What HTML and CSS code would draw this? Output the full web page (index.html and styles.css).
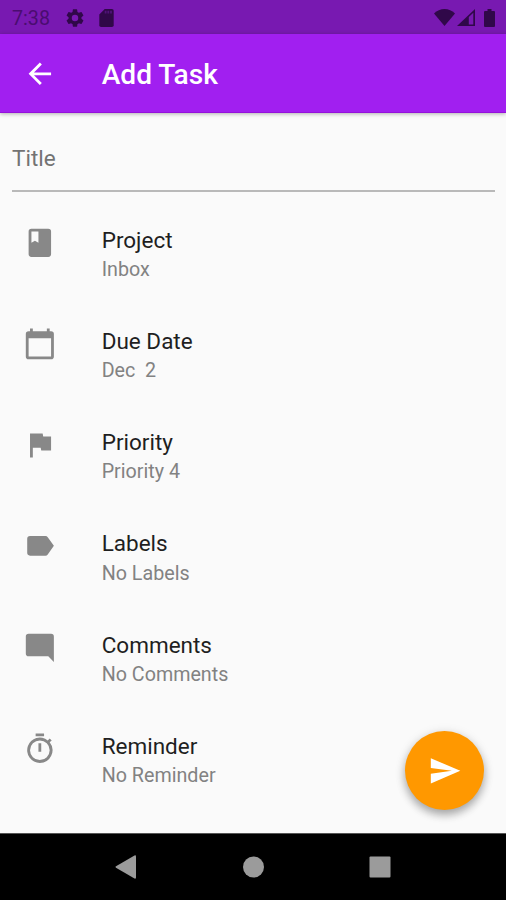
FILE: index.html
```html
<!DOCTYPE html>
<html lang="en">
<head>
<meta charset="utf-8">
<title>Add Task</title>
<link rel="stylesheet" href="styles.css">
</head>
<body>
<div class="screen">
  <div class="status">
    <span class="time">7:38</span>
    <svg class="gear" viewBox="2 2 20 20"><path d="M19.14 12.94c.04-.3.06-.61.06-.94s-.02-.64-.07-.94l2.03-1.58a.49.49 0 0 0 .12-.61l-1.92-3.32a.49.49 0 0 0-.59-.22l-2.39.96c-.5-.38-1.03-.7-1.62-.94l-.36-2.54a.48.48 0 0 0-.48-.41h-3.84c-.24 0-.43.17-.47.41l-.36 2.54c-.59.24-1.13.57-1.62.94l-2.39-.96a.48.48 0 0 0-.59.22L2.74 8.87c-.12.21-.08.47.12.61l2.03 1.58c-.05.3-.09.63-.09.94s.02.64.07.94l-2.03 1.58a.49.49 0 0 0-.12.61l1.92 3.32c.12.22.37.29.59.22l2.39-.96c.5.38 1.03.7 1.62.94l.36 2.54c.05.24.24.41.48.41h3.84c.24 0 .44-.17.47-.41l.36-2.54c.59-.24 1.13-.56 1.62-.94l2.39.96c.22.08.47 0 .59-.22l1.92-3.32a.48.48 0 0 0-.12-.61zM12 15.6A3.6 3.6 0 1 1 12 8.4a3.6 3.6 0 0 1 0 7.2z"/></svg>
    <svg class="sd" viewBox="4 2 16 20"><path d="M18 2h-8L4.02 8 4 20a2 2 0 0 0 2 2h12a2 2 0 0 0 2-2V4a2 2 0 0 0-2-2z"/><path class="pins" d="M10 4h2v3h-2zM13 4h2v3h-2zM16 4h2v3h-2z"/></svg>
    <svg class="wifi" viewBox="0 0 21 17"><path d="M0 4.5C3 1.5 6.500 0 10.500 0S18 1.500 21 4.500L10.500 17z"/></svg>
    <svg class="signal" viewBox="0 0 18 17"><path fill-rule="evenodd" d="M0 17 18 0v17zM11.800 8v7.500h4.500V3.800z"/></svg>
    <svg class="battery" viewBox="0 0 11 18"><path d="M3.500 0h4v2H10a1 1 0 0 1 1 1v14a1 1 0 0 1-1 1H1a1 1 0 0 1-1-1V3a1 1 0 0 1 1-1h2.500z"/></svg>
  </div>
  <header class="appbar">
    <svg class="icon" viewBox="0 0 24 24"><path d="M20 11H7.830l5.590-5.590L12 4l-8 8 8 8 1.410-1.410L7.830 13H20z"/></svg>
    <h1>Add Task</h1>
  </header>
  <main>
    <div class="field">Title</div>
    <ul class="list">
      <li><svg class="icon" viewBox="0 0 24 24"><path d="M18 2H6a2 2 0 0 0-2 2v16a2 2 0 0 0 2 2h12a2 2 0 0 0 2-2V4a2 2 0 0 0-2-2zM6 4h5v8l-2.500-1.500L6 12z"/></svg><div><p class="name">Project</p><p class="value">Inbox</p></div></li>
      <li><svg class="icon" viewBox="0 0 24 24"><path d="M20 3h-1V1h-2v2H7V1H5v2H4a2 2 0 0 0-2 2v16a2 2 0 0 0 2 2h16a2 2 0 0 0 2-2V5a2 2 0 0 0-2-2zm0 18H4V8h16z"/></svg><div><p class="name">Due Date</p><p class="value">Dec  2</p></div></li>
      <li><svg class="icon" viewBox="0 0 24 24"><path d="M14.400 6 14 4H5v17h2v-7h5.600l.4 2h7V6z"/></svg><div><p class="name">Priority</p><p class="value">Priority 4</p></div></li>
      <li><svg class="icon" viewBox="0 0 24 24"><path d="M17.630 5.840A2 2 0 0 0 16 5L5 5.010A2 2 0 0 0 3 7v10a2 2 0 0 0 2 1.990L16 19a2 2 0 0 0 1.630-.84L22 12z"/></svg><div><p class="name">Labels</p><p class="value">No Labels</p></div></li>
      <li><svg class="icon" viewBox="0 0 24 24"><path d="M21.990 4A2 2 0 0 0 20 2H4a2 2 0 0 0-2 2v12a2 2 0 0 0 2 2h14l4 4z"/></svg><div><p class="name">Comments</p><p class="value">No Comments</p></div></li>
      <li><svg class="icon" viewBox="0 0 24 24"><path d="M15 1H9v2h6zm-4 13h2V8h-2zm8.030-6.610 1.420-1.420a11 11 0 0 0-1.410-1.410l-1.420 1.420A9 9 0 1 0 12 22a9 9 0 0 0 7.030-14.610zM12 20a7 7 0 1 1 0-14 7 7 0 0 1 0 14z"/></svg><div><p class="name">Reminder</p><p class="value">No Reminder</p></div></li>
    </ul>
  </main>
  <nav class="navbar">
    <svg viewBox="0 0 22 24"><path d="M1 11.300 19.500.500q1.500-.6 1.500 1v21q0 1.600-1.500 1L1 12.700q-1-.7 0-1.400z"/></svg>
    <svg viewBox="0 0 22 24"><circle cx="11.500" cy="12" r="10.500"/></svg>
    <svg viewBox="0 0 22 24"><rect x=".5" y="1.500" width="21" height="21" rx="1"/></svg>
  </nav>
  <div class="fab"><svg class="icon" viewBox="0 0 24 24"><path d="M2.010 21 23 12 2.010 3 2 10l15 2-15 2z"/></svg></div>
</div>
</body>
</html>
```
FILE: styles.css
```css
* { box-sizing: border-box; margin: 0; padding: 0; }
body { font-family: Roboto, "Liberation Sans", sans-serif; background: #fafafa; }
svg { display: block; flex: none; fill: currentColor; }
.screen {
  position: relative;
  width: 506px;
  height: 900px;
  display: flex;
  flex-direction: column;
  overflow: hidden;
}
.status {
  height: 34px;
  flex: none;
  display: flex;
  align-items: center;
  padding: 1px 11px 0 12px;
  background: #7819b1;
  color: #300849;
}
.time { width: 54px; font-size: 19.7px; line-height: 32px; padding-top: 2px; color: #4a0d70; }
.gear { width: 18px; height: 18px; }
.sd { width: 15px; height: 18px; margin: 0 auto 0 15px; }
.pins { fill: #50127a; }
.wifi { width: 21px; height: 17px; }
.signal { width: 18px; height: 17px; margin: 0 9px 0 2px; }
.battery { width: 11px; height: 18px; }
.icon { width: 33.7px; height: 33.7px; }
.appbar {
  position: relative;
  height: 79px;
  flex: none;
  display: flex;
  align-items: center;
  gap: 45px;
  padding: 1px 23px 0;
  background: #a11ff0;
  color: #fff;
  border-bottom: 1px solid #9511dc;
  box-shadow: 0 1px 4px rgba(0, 0, 0, .3);
}
.appbar h1 { font-size: 28.1px; font-weight: 500; line-height: 36px; padding-top: 3px; }
main { flex: 1; background: #fafafa; }
.field {
  height: 79px;
  margin: 0 11px 0 12px;
  padding-top: 30px;
  font-size: 22.5px;
  line-height: 30px;
  color: #737373;
  border-bottom: 2px solid #b9b9b9;
}
.list { list-style: none; padding-top: 13px; }
.list li {
  height: 101.25px;
  display: flex;
  gap: 45px;
  padding: 20.5px 23px 0;
  color: #888;
}
.name { font-size: 22.5px; line-height: 28px; color: #1f1f1f; }
.value { font-size: 19.7px; line-height: 28px; padding-top: 2.3px; color: #828282; white-space: pre; }
.navbar {
  height: 67px;
  flex: none;
  display: flex;
  justify-content: center;
  align-items: center;
  gap: 105px;
  background: #000;
  color: #9b9b9b;
  border-top: 1px solid #555;
}
.navbar svg { width: 22px; height: 24px; }
.fab {
  position: absolute;
  left: 405px;
  top: 731px;
  width: 79px;
  height: 79px;
  border-radius: 50%;
  display: flex;
  align-items: center;
  justify-content: center;
  background: #ff9800;
  color: #fff;
  box-shadow: 0 5px 8px rgba(0, 0, 0, .28), 0 2px 12px rgba(0, 0, 0, .12);
}
```
